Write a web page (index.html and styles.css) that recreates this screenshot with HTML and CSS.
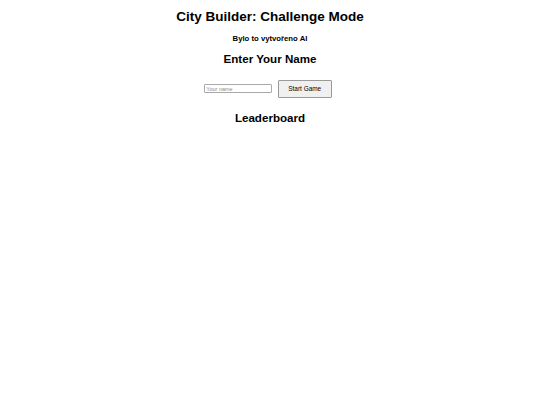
FILE: index.html
```html
<!DOCTYPE html>
<html>
<head>
<meta charset="utf-8">
<link rel="stylesheet" href="styles.css">
</head>
<body>
<h1 class="title">City Builder: Challenge Mode</h1>
<p class="credit">Bylo to vytvořeno AI</p>
<h2 class="section section-name">Enter Your Name</h2>
<div class="form">
  <input class="name" type="text" placeholder="Your name">
  <button class="start">Start Game</button>
</div>
<h2 class="section">Leaderboard</h2>
</body>
</html>
```
FILE: styles.css
```css
html, body {
  background: #ffffff;
}
body {
  margin: 0 3.86px 3.86px;
  font-family: "Liberation Sans", Arial, sans-serif;
  color: #000;
  text-align: center;
}
.title {
  font-size: 13.5px;
  line-height: 15.5px;
  margin: 9px 0 10px;
  font-weight: bold;
}
.credit {
  font-size: 7.72px;
  line-height: 8.9px;
  margin: 7.72px 0;
  font-weight: bold;
}
.section {
  font-size: 11.58px;
  line-height: 13.3px;
  margin: 9.6px 0;
  font-weight: bold;
}
.section-name {
  margin-bottom: 8.7px;
}
.form {
  display: flex;
  justify-content: center;
  align-items: center;
  gap: 6px;
  padding-right: 4px;
}
.name {
  box-sizing: border-box;
  width: 67.5px;
  height: 9px;
  padding: 0 1px;
  margin: 0;
  border: 1px solid #a9a9a9;
  border-radius: 1px;
  font-family: "Liberation Sans", Arial, sans-serif;
  font-size: 5.5px;
  color: #000;
  outline: none;
}
.name::placeholder {
  color: #8a8a8a;
}
.start {
  box-sizing: border-box;
  width: 54px;
  height: 18px;
  margin: 4.8px 0;
  padding: 0;
  border: 1px solid #9a9a9a;
  border-radius: 1px;
  background: #f0f0f0;
  font-family: "Liberation Sans", Arial, sans-serif;
  font-size: 6.45px;
  color: #000;
}
```
